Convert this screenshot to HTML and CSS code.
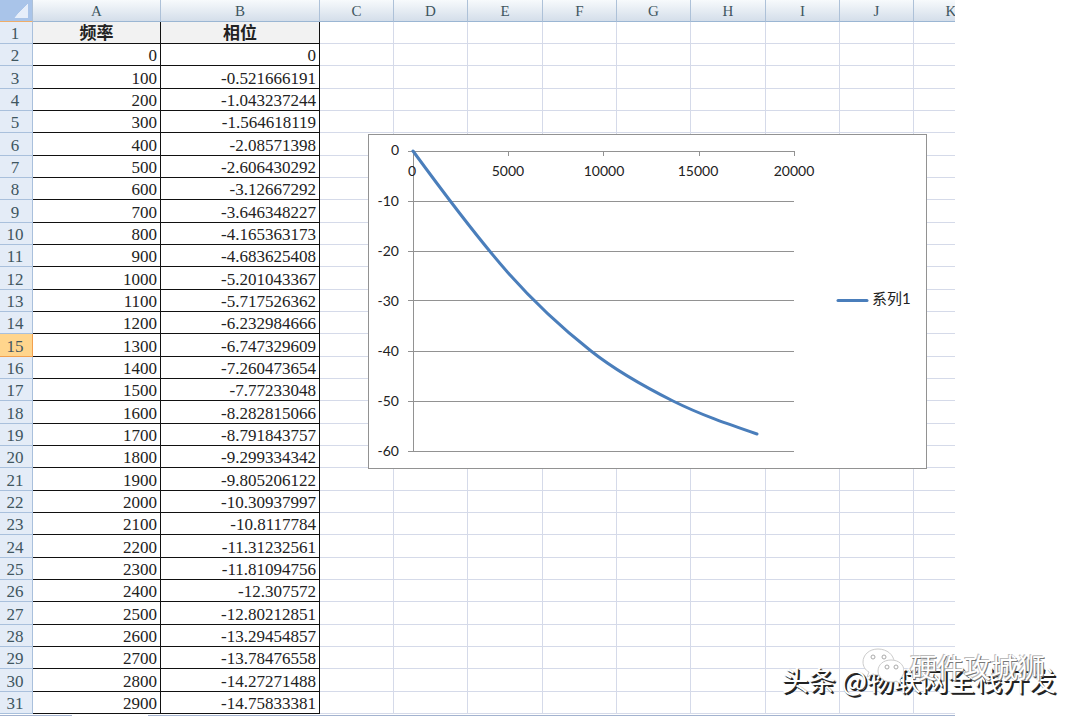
FILE: index.html
```html
<!DOCTYPE html>
<html lang="zh-CN">
<head>
<meta charset="utf-8">
<title>频率 / 相位</title>
<link rel="stylesheet" href="styles.css">
</head>
<body>
<main class="workbook">
  <div class="sheet">
    <table class="grid">
      <colgroup>
        <col class="col-index"><col class="col-freq"><col class="col-phase">
        <col><col><col class="wide"><col><col><col class="wide"><col><col><col class="wide">
      </colgroup>
      <thead>
        <tr><th class="corner" aria-label="全选"></th><th>A</th><th>B</th><th>C</th><th>D</th><th>E</th><th>F</th><th>G</th><th>H</th><th>I</th><th>J</th><th>K</th></tr>
      </thead>
      <tbody id="rows"></tbody>
    </table>

    <figure class="chart">
      <svg viewBox="368 134 559 335" role="img" aria-label="系列1">
        <g class="lines">
          <path d="M408 151.5H794M408 201.5H794M408 251.5H794M408 300.5H794M408 351.5H794M408 401.5H794M408 451.5H794"/>
          <path d="M413.5 151V452M508.5 151V156M603.5 151V156M699.5 151V156M794.5 151V156"/>
        </g>
        <path class="series" d="M413 151C444.7 194.3 476.3 236.8 508 272.7C535.7 304 563.3 329.1 591 351C618.3 372.6 645.7 387.3 673 401C701 415 729 424.5 757 434"/>
        <g class="y-labels">
          <text x="399" y="155">0</text><text x="399" y="206">-10</text><text x="399" y="256">-20</text><text x="399" y="306">-30</text><text x="399" y="356">-40</text><text x="399" y="406">-50</text><text x="399" y="456">-60</text>
        </g>
        <g class="x-labels">
          <text x="412" y="176">0</text><text x="508" y="176">5000</text><text x="604" y="176">10000</text><text x="698" y="176">15000</text><text x="794" y="176">20000</text>
        </g>
        <path class="series" d="M838 300.5H867"/>
        <text class="legend" x="872" y="304">系列1</text>
      </svg>
    </figure>
  </div>
  <div class="scroll-edge"><span></span></div>
</main>

<div class="mark mark-main">头条 @物联网全栈开发</div>
<div class="mark mark-sub">
  <svg class="bubbles" viewBox="0 0 42 38" aria-hidden="true">
    <path d="M16 1C7 1 1 7 1 14c0 4 2 8 6 10l-2 5 6-3c2 1 5 1 7 1 8-1 14-6 14-13C32 7 25 1 16 1z"/>
    <path d="M29 12c-8 0-13 5-13 11s6 11 13 11c2 0 4 0 5-1l5 3-1-5c2-2 4-5 4-8 0-6-5-11-13-11z"/>
    <circle cx="11" cy="9" r="2"/><circle cx="22" cy="9" r="2"/><circle cx="25" cy="19" r="2"/><circle cx="34" cy="19" r="2"/>
  </svg>
  <span>硬件攻城狮</span>
</div>
<script src="sheet.js"></script>
</body>
</html>
```
FILE: styles.css
```css
* { box-sizing: border-box; }

body {
  margin: 0;
  position: relative;
  height: 100vh;
  overflow: hidden;
  background: #fff;
  color: #222;
  font-family: "Liberation Serif", "Noto Sans CJK SC", serif;
}

.workbook {
  display: flex;
  flex-direction: column;
  height: 100%;
  max-width: 955px;
}

.sheet {
  position: relative;
  flex: 1;
  min-height: 0;
  overflow: hidden;
}

.grid {
  table-layout: fixed;
  width: 989px;
  border-collapse: separate;
  border-spacing: 0;
  font-size: 17px;
  line-height: 19px;
}

.grid col { width: 74px; }
.grid col.wide { width: 75px; }
.grid col.col-index { width: 33px; }
.grid col.col-freq { width: 128px; }
.grid col.col-phase { width: 159px; }

.grid th,
.grid td {
  height: 22px;
  padding: 2px 0 0;
  border-right: 1px solid #d5dae9;
  border-bottom: 1px solid #d5dae9;
  white-space: nowrap;
}

.grid tbody tr:nth-child(3n) > * { height: 23px; }

.grid thead th {
  background: linear-gradient(#f7fafc, #d4deea);
  border-right-color: #adc1d8;
  border-bottom-color: #9bb6d3;
  color: #3f565f;
  font-size: 15px;
  font-weight: normal;
}

.grid thead th.corner {
  background: linear-gradient(to bottom right, transparent 50%, #e6eefa 51%) 14px 3px / 14px 15px no-repeat, #a9c4e9;
  border-bottom-color: #efad69;
}

.grid tbody th {
  padding-right: 2px;
  background: #e4ecf7;
  border-right-color: #a9c0dc;
  border-bottom-color: #a9c0dc;
  color: #3f565f;
  font-weight: normal;
  text-align: center;
}

.grid tbody th.active {
  background: #ffd58d;
  border-color: #f2a04e;
}

.grid td.value {
  padding-right: 3px;
  border-color: #111;
  text-align: right;
}

.grid td.title {
  background: #f2f2f2;
  border-color: #111;
  font-weight: bold;
  text-align: center;
}

.chart {
  position: absolute;
  left: 368px;
  top: 134px;
  width: 559px;
  margin: 0;
  background: #fff;
  outline: 1px solid #929292;
  outline-offset: -1px;
}

.chart svg { display: block; width: 100%; }
.chart text { font: 14px Lato, "Noto Sans CJK SC", sans-serif; fill: #222; }
.chart text.legend { font-size: 15px; }
.chart .lines path { fill: none; stroke: #929292; }
.chart .series { fill: none; stroke: #4a7ebb; stroke-width: 3; stroke-linecap: round; }
.chart .y-labels { text-anchor: end; }
.chart .x-labels { text-anchor: middle; }

.scroll-edge {
  height: 1px;
  background: #a3b3cf;
}

.scroll-edge span {
  display: block;
  width: 76px;
  height: 1px;
  margin-left: 72px;
  background: #fff;
}

.mark {
  position: absolute;
  color: #fff;
  font-family: "Noto Sans CJK SC", sans-serif;
  font-size: 27px;
  line-height: 36px;
  white-space: nowrap;
}

.mark-main {
  right: 24px;
  bottom: 18px;
  text-shadow: 1px 1px 1px #222, 2px 2px 0 #222;
}

.mark-sub {
  right: 35px;
  bottom: 30px;
  display: flex;
  align-items: center;
  gap: 6px;
  text-shadow: 1px 1px 0 #777, -1px -1px 0 #bbb;
}

.bubbles { width: 42px; height: 38px; }
.bubbles path { fill: #fff; stroke: #ccc; stroke-width: 1; }
.bubbles circle { fill: #fff; stroke: #aaa; stroke-width: 1; }
```
FILE: sheet.js
```js
const phases = [
  "0", "-0.521666191", "-1.043237244", "-1.564618119", "-2.08571398",
  "-2.606430292", "-3.12667292", "-3.646348227", "-4.165363173", "-4.683625408",
  "-5.201043367", "-5.717526362", "-6.232984666", "-6.747329609", "-7.260473654",
  "-7.77233048", "-8.282815066", "-8.791843757", "-9.299334342", "-9.805206122",
  "-10.30937997", "-10.8117784", "-11.31232561", "-11.81094756", "-12.307572",
  "-12.80212851", "-13.29454857", "-13.78476558", "-14.27271488", "-14.75833381"
];
const activeRow = 15;
const emptyColumns = 9;
const body = document.getElementById("rows");

function addRow(first, second, className) {
  const row = body.insertRow();
  const head = document.createElement("th");
  head.scope = "row";
  head.textContent = body.rows.length;
  if (body.rows.length === activeRow) head.className = "active";
  row.append(head);
  for (const text of [first, second]) {
    const cell = row.insertCell();
    cell.className = className;
    cell.textContent = text;
  }
  for (let i = 0; i < emptyColumns; i++) row.insertCell();
}

addRow("频率", "相位", "title");
phases.forEach((phase, i) => addRow(i * 100, phase, "value"));
```
